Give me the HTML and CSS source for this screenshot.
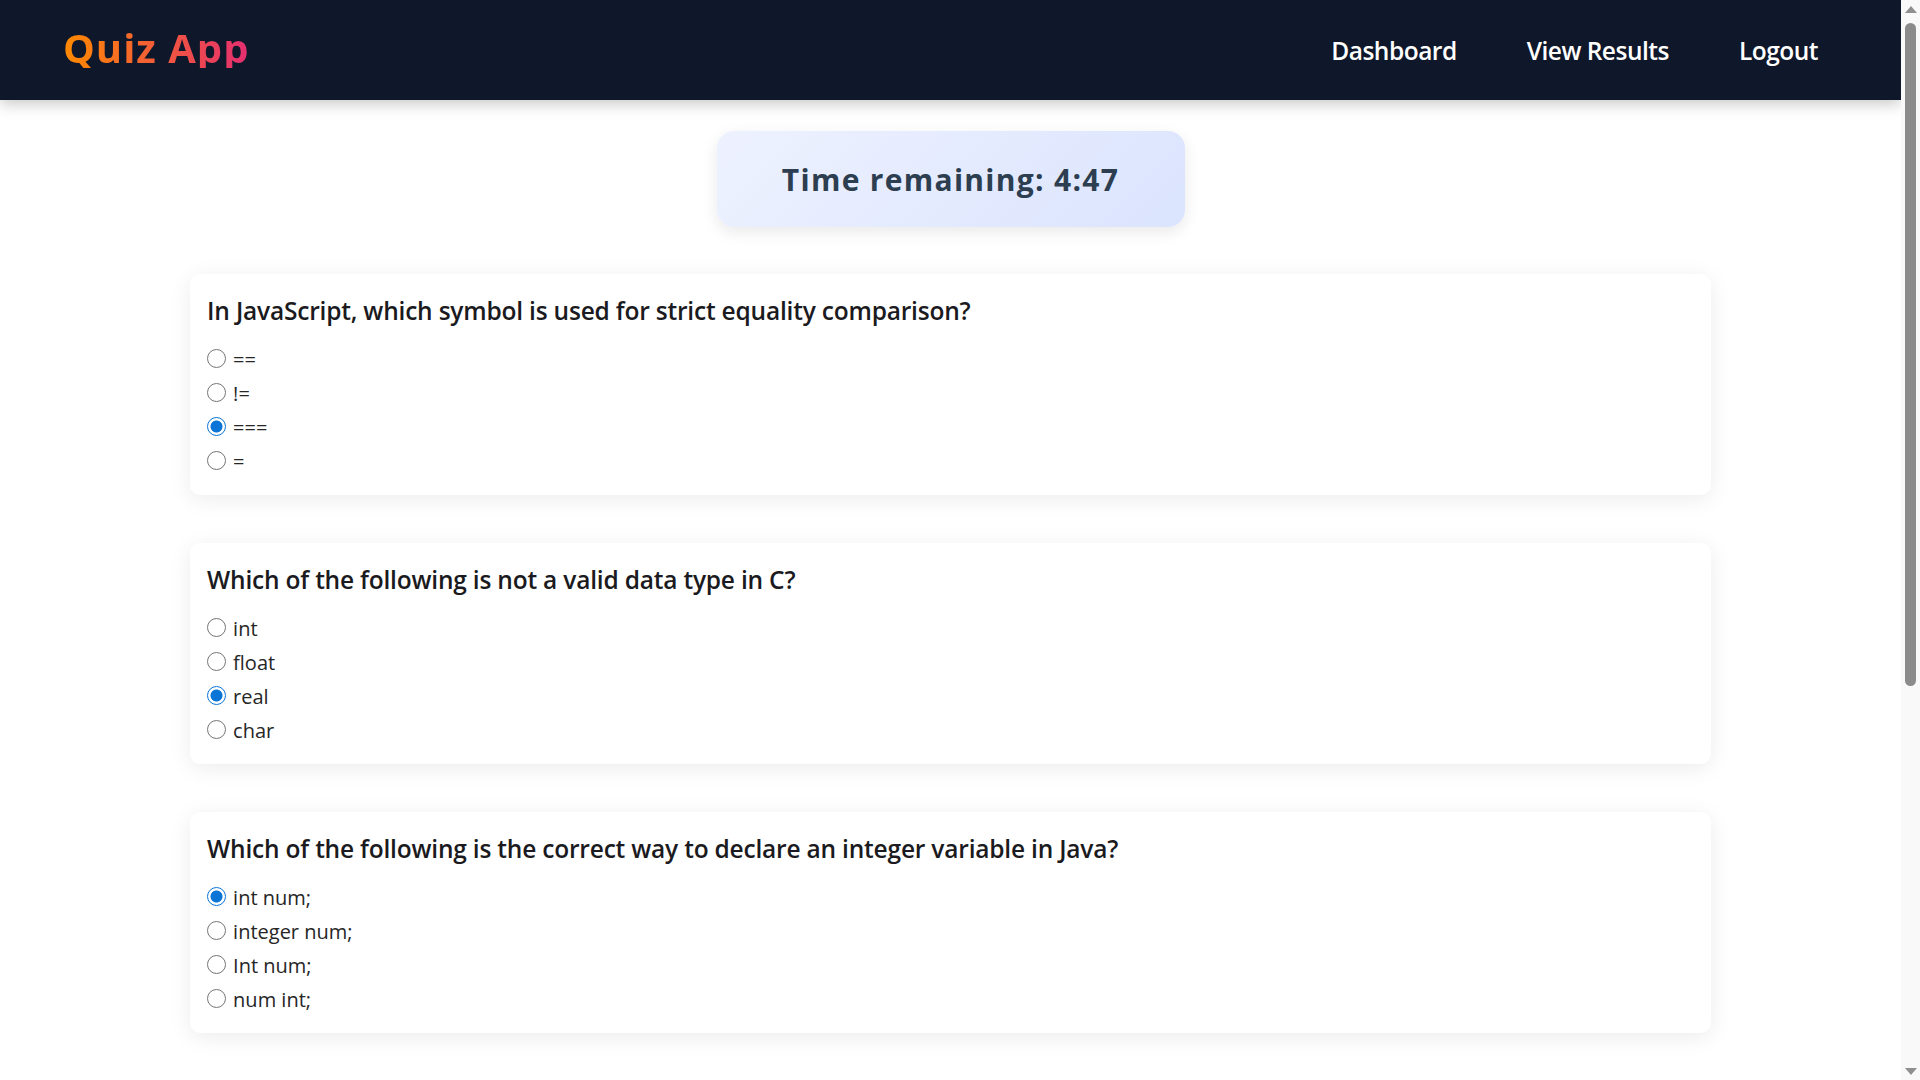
FILE: index.html
```html
<!DOCTYPE html>
<html lang="en">
<head>
<meta charset="utf-8">
<title>Quiz App</title>
<link rel="stylesheet" href="styles.css">
</head>
<body>
<div class="app">
  <div class="page">
    <header class="topbar">
      <div class="logo">Quiz App</div>
      <nav class="nav">
        <a href="#">Dashboard</a>
        <a href="#">View Results</a>
        <a href="#">Logout</a>
      </nav>
    </header>
    <main class="main">
      <div class="timer">Time remaining: 4:47</div>

      <section class="card">
        <h3 class="question">In JavaScript, which symbol is used for strict equality comparison?</h3>
        <label class="option"><input type="radio" name="q1">==</label>
        <label class="option"><input type="radio" name="q1">!=</label>
        <label class="option"><input type="radio" name="q1" checked>===</label>
        <label class="option"><input type="radio" name="q1">=</label>
      </section>

      <section class="card">
        <h3 class="question">Which of the following is not a valid data type in C?</h3>
        <label class="option"><input type="radio" name="q2">int</label>
        <label class="option"><input type="radio" name="q2">float</label>
        <label class="option"><input type="radio" name="q2" checked>real</label>
        <label class="option"><input type="radio" name="q2">char</label>
      </section>

      <section class="card">
        <h3 class="question">Which of the following is the correct way to declare an integer variable in Java?</h3>
        <label class="option"><input type="radio" name="q3" checked>int num;</label>
        <label class="option"><input type="radio" name="q3">integer num;</label>
        <label class="option"><input type="radio" name="q3">Int num;</label>
        <label class="option"><input type="radio" name="q3">num int;</label>
      </section>
    </main>
  </div>
  <div class="scrollbar" aria-hidden="true">
    <span class="arrow up"></span>
    <div class="track"><div class="thumb"></div></div>
    <span class="arrow down"></span>
  </div>
</div>
</body>
</html>
```

FILE: styles.css
```css
* { box-sizing: border-box; }

html, body {
  margin: 0;
  padding: 0;
  height: 100%;
  overflow: hidden;
}

body {
  background: #ffffff;
  font-family: "Open Sans", "Noto Sans", "Liberation Sans", sans-serif;
  color: #222;
}

.app {
  display: flex;
  height: 100vh;
}

.page {
  flex: 1;
  min-width: 0;
  overflow: hidden;
}

/* fake classic scrollbar */
.scrollbar {
  width: 19px;
  background: #f9f9f9;
  display: flex;
  flex-direction: column;
  align-items: center;
  padding: 5px 0 5px;
}

.arrow {
  width: 0;
  height: 0;
  border-left: 6px solid transparent;
  border-right: 6px solid transparent;
}

.arrow.up {
  border-bottom: 7px solid #8f8f8f;
  margin-top: 1px;
}

.arrow.down {
  border-top: 7px solid #8f8f8f;
}

.track {
  flex: 1;
  width: 100%;
  display: flex;
  justify-content: center;
  padding-top: 10px;
}

.thumb {
  width: 11px;
  height: 663px;
  background: #8b8b8b;
  border-radius: 6px;
}

.topbar {
  height: 100px;
  background: #0f172a;
  display: flex;
  align-items: center;
  justify-content: space-between;
  padding: 0 83px 0 63px;
  box-shadow: 0 4px 14px rgba(0, 0, 0, 0.22);
  position: relative;
  z-index: 1;
}

.logo {
  font-size: 40px;
  font-weight: 700;
  letter-spacing: 1px;
  background: linear-gradient(90deg, #ff8a00, #e52e71);
  -webkit-background-clip: text;
  background-clip: text;
  color: transparent;
  line-height: 1;
  margin-top: -4px;
}

.nav {
  display: flex;
  gap: 70px;
}

.nav a {
  color: #ffffff;
  text-decoration: none;
  font-size: 24.5px;
  font-weight: 600;
  letter-spacing: -0.5px;
}

.main {
  padding: 31px 0 40px;
  display: flex;
  flex-direction: column;
  align-items: center;
}

.timer {
  width: 468px;
  height: 96px;
  border-radius: 17px;
  background: linear-gradient(135deg, #eef2ff, #dbe4fe);
  box-shadow: 0 5px 16px rgba(0, 0, 0, 0.09);
  display: flex;
  align-items: center;
  justify-content: center;
  font-size: 30px;
  font-weight: 700;
  letter-spacing: 1.3px;
  color: #2c3e50;
  margin-bottom: 47px;
}

.card {
  width: 80%;
  background: #ffffff;
  border-radius: 10px;
  box-shadow: 0 4px 22px rgba(0, 0, 0, 0.08);
  padding: 21px 17px 16px;
  margin-bottom: 48px;
}

.question {
  margin: 0 0 16px;
  font-size: 24.5px;
  line-height: 32px;
  font-weight: 600;
  letter-spacing: -0.2px;
  color: #1a1a20;
}

.option {
  display: block;
  font-size: 20px;
  line-height: 34px;
  color: #262626;
}

.option input {
  -webkit-appearance: none;
  appearance: none;
  width: 19px;
  height: 19px;
  margin: 0 7px 0 0;
  border: 1.5px solid #767676;
  border-radius: 50%;
  background: #fff;
  vertical-align: -1px;
}

.option input:checked {
  border: 1.5px solid #0a75d6;
  background: radial-gradient(circle, #0a75d6 0, #0a75d6 5.6px, #ffffff 6.4px);
}
```
